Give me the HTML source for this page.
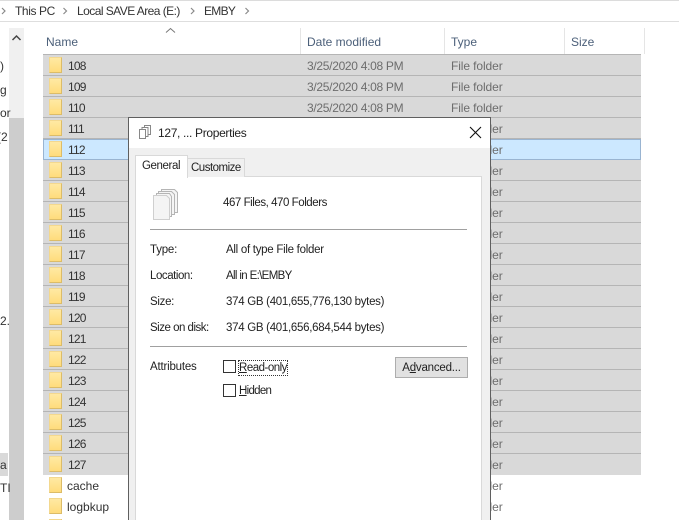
<!DOCTYPE html>
<html><head><meta charset="utf-8"><style>
html{margin:0;padding:0;background:#fff;overflow:hidden;width:679px;height:520px}
body{margin:0;padding:0;background:#fff;width:679px;height:520px;overflow:hidden;position:relative;font-family:"Liberation Sans",sans-serif;font-size:12px;color:#1a1a1a}
#w{position:absolute;left:0;top:0;width:679px;height:520px;overflow:hidden}
.a{position:absolute;white-space:nowrap;line-height:16px}
.s{font-size:11.5px;color:#222;margin-top:1px}
.r{position:absolute;left:43px;width:598px;height:20px;background:#d9d9d9;border-bottom:1px solid #b5b5b5}
.f{position:absolute;left:6px;top:2px;width:11px;height:14px;background:linear-gradient(#ffe9a3,#ffdc7c);border:1px solid #f3d88f;border-right-color:#dcbc68;border-bottom-color:#dcbc68}
.n{position:absolute;left:25px;top:3px;line-height:16px;color:#333;letter-spacing:-.8px}
.w{left:24px;letter-spacing:0}
.d{position:absolute;left:264px;top:3px;line-height:16px;color:#6d6d6d;letter-spacing:-.3px}
.t{position:absolute;left:408px;top:3px;line-height:16px;color:#6d6d6d;letter-spacing:-.1px}
.h{position:absolute;top:28px;width:1px;height:26px;background:#e5e5e5}
.c{position:absolute;left:223px;width:11px;height:11px;border:1px solid #333;background:#fff}
u{text-decoration:underline}
</style></head><body><div id="w">
<div class="a" style="left:0;top:0;width:679px;height:1px;background:#dcdcdc"></div>
<div class="a" style="left:0;top:21px;width:679px;height:1px;background:#dedede"></div>
<svg class="a" style="left:0;top:6px" width="260" height="10"><path d="M2 2l3 3-3 3M63.500 2l3 3-3 3M191 2l3 3-3 3M245.500 2l3 3-3 3" fill="none" stroke="#8a8a8a" stroke-width="1.2"/></svg>
<div class="a" style="left:15px;top:3px;color:#333;letter-spacing:-.4px">This PC</div>
<div class="a" style="left:77px;top:3px;color:#333;letter-spacing:-.55px">Local SAVE Area (E:)</div>
<div class="a" style="left:204px;top:3px;color:#333;letter-spacing:-.7px">EMBY</div>

<div class="a" style="left:9px;top:28px;width:15px;height:492px;background:#f0f0f0"></div>
<div class="a" style="left:9px;top:118px;width:15px;height:402px;background:#cdcdcd"></div>
<svg class="a" style="left:11px;top:34px" width="11" height="8"><path d="M1.500 6 L5.500 2 L9.500 6" fill="none" stroke="#444" stroke-width="1.5"/></svg>
<div class="a" style="left:0;top:58px;color:#333">)</div>
<div class="a" style="left:0;top:82px;color:#333">g</div>
<div class="a" style="left:0;top:105px;color:#333">or</div>
<div class="a" style="left:-3px;top:129px;color:#333">(2</div>
<div class="a" style="left:0;top:313px;color:#333">2.</div>
<div class="a" style="left:0;top:453px;width:8px;height:23px;background:#d9d9d9"></div>
<div class="a" style="left:0;top:457px;color:#333">a</div>
<div class="a" style="left:0;top:480px;color:#333">TI</div>

<svg class="a" style="left:165px;top:27px" width="11" height="7"><path d="M1 5.500 L5.500 1.500 L10 5.500" fill="none" stroke="#777" stroke-width="1"/></svg>
<div class="a" style="left:46px;top:34px;color:#4c607a">Name</div>
<div class="a" style="left:307px;top:34px;color:#4c607a">Date modified</div>
<div class="a" style="left:451px;top:34px;color:#4c607a">Type</div>
<div class="a" style="left:571px;top:34px;color:#4c607a">Size</div>
<div class="h" style="left:300px"></div><div class="h" style="left:444px"></div><div class="h" style="left:564px"></div><div class="h" style="left:644px"></div>
<div class="a" style="left:43px;top:54px;width:598px;height:1px;background:#b5b5b5"></div>

<div class="r" style="top:55px"><i class="f"></i><span class="n">108</span><span class="d">3/25/2020 4:08 PM</span><span class="t">File folder</span></div>
<div class="r" style="top:76px"><i class="f"></i><span class="n">109</span><span class="d">3/25/2020 4:08 PM</span><span class="t">File folder</span></div>
<div class="r" style="top:97px"><i class="f"></i><span class="n">110</span><span class="d">3/25/2020 4:08 PM</span><span class="t">File folder</span></div>
<div class="r" style="top:118px"><i class="f"></i><span class="n">111</span><span class="t">File folder</span></div>
<div class="r" style="top:139px;background:#cce8ff;width:596px;height:19px;border:1px solid #99b4d1"><i class="f" style="left:5px;top:1px"></i><span class="n" style="left:24px;top:2px">112</span><span class="t" style="left:407px;top:2px">File folder</span></div>
<div class="r" style="top:160px"><i class="f"></i><span class="n">113</span><span class="t">File folder</span></div>
<div class="r" style="top:181px"><i class="f"></i><span class="n">114</span><span class="t">File folder</span></div>
<div class="r" style="top:202px"><i class="f"></i><span class="n">115</span><span class="t">File folder</span></div>
<div class="r" style="top:223px"><i class="f"></i><span class="n">116</span><span class="t">File folder</span></div>
<div class="r" style="top:244px"><i class="f"></i><span class="n">117</span><span class="t">File folder</span></div>
<div class="r" style="top:265px"><i class="f"></i><span class="n">118</span><span class="t">File folder</span></div>
<div class="r" style="top:286px"><i class="f"></i><span class="n">119</span><span class="t">File folder</span></div>
<div class="r" style="top:307px"><i class="f"></i><span class="n">120</span><span class="t">File folder</span></div>
<div class="r" style="top:328px"><i class="f"></i><span class="n">121</span><span class="t">File folder</span></div>
<div class="r" style="top:349px"><i class="f"></i><span class="n">122</span><span class="t">File folder</span></div>
<div class="r" style="top:370px"><i class="f"></i><span class="n">123</span><span class="t">File folder</span></div>
<div class="r" style="top:391px"><i class="f"></i><span class="n">124</span><span class="t">File folder</span></div>
<div class="r" style="top:412px"><i class="f"></i><span class="n">125</span><span class="t">File folder</span></div>
<div class="r" style="top:433px"><i class="f"></i><span class="n">126</span><span class="t">File folder</span></div>
<div class="r" style="top:454px;border-bottom-color:#d9d9d9"><i class="f"></i><span class="n">127</span><span class="t">File folder</span></div>
<div class="r" style="top:475px;background:#fff;border-bottom-color:#fff"><i class="f"></i><span class="n w">cache</span><span class="t">File folder</span></div>
<div class="r" style="top:496px;background:#fff;border-bottom-color:#fff"><i class="f"></i><span class="n w">logbkup</span><span class="t">File folder</span></div>
<div class="r" style="top:517px;background:#fff;border-bottom-color:#fff;height:3px;overflow:hidden"><i class="f"></i></div>

<!-- dialog -->
<div class="a" style="left:128px;top:117px;width:361px;height:403px;background:#f0f0f0;border:1px solid #5f5f5f;border-bottom:0"></div>
<div class="a" style="left:129px;top:118px;width:361px;height:30px;background:#fff"></div>
<svg class="a" style="left:138px;top:125px" width="14" height="15"><g fill="#fff" stroke="#888"><rect x="6.500" y=".5" width="6" height="9"/><rect x="4" y="2.500" width="6" height="9"/><rect x="1.500" y="4.500" width="6" height="9"/></g></svg>
<div class="a" style="left:158px;top:125px;color:#222;letter-spacing:-.33px">127, ... Properties</div>
<svg class="a" style="left:469px;top:126px" width="13" height="13"><path d="M1 1 L12 12 M12 1 L1 12" stroke="#111" stroke-width="1.1" fill="none"/></svg>

<div class="a" style="left:135px;top:176px;width:345px;height:344px;background:#fff;border:1px solid #d9d9d9;border-bottom:0"></div>
<div class="a" style="left:187px;top:158px;width:56px;height:18px;background:#f0f0f0;border:1px solid #d9d9d9;border-bottom:0"></div>
<div class="a" style="left:135px;top:155px;width:51px;height:22px;background:#fff;border:1px solid #d9d9d9;border-bottom:0"></div>
<div class="a s" style="left:142px;top:157px;letter-spacing:-.4px">General</div>
<div class="a s" style="left:191px;top:159px;letter-spacing:-.5px">Customize</div>

<svg class="a" style="left:152px;top:188px" width="28" height="33"><g fill="#f5f5f5" stroke="#b5b5b5"><path d="M9.500 1.500h13l3 3v20h-16z"/><path d="M6.500 3.500h13l3 3v20h-16z"/><path d="M4.500 5.500h13l2 3v20h-15z"/><path d="M1.500 7.500h13l3 3v21h-16z" fill="#f4f4f4" stroke="#cfcfcf"/></g></svg>
<div class="a s" style="left:223px;top:194px;letter-spacing:-.45px">467 Files, 470 Folders</div>
<div class="a" style="left:150px;top:229px;width:317px;height:1px;background:#a0a0a0"></div>

<div class="a s" style="left:150px;top:241px;letter-spacing:-.2px">Type:</div>
<div class="a s" style="left:226px;top:241px;letter-spacing:-.28px">All of type File folder</div>
<div class="a s" style="left:150px;top:267px;letter-spacing:-.45px">Location:</div>
<div class="a s" style="left:226px;top:267px;letter-spacing:-.65px">All in E:\EMBY</div>
<div class="a s" style="left:150px;top:293px;letter-spacing:-.3px">Size:</div>
<div class="a s" style="left:226px;top:293px;letter-spacing:-.29px">374 GB (401,655,776,130 bytes)</div>
<div class="a s" style="left:150px;top:319px;letter-spacing:-.5px">Size on disk:</div>
<div class="a s" style="left:226px;top:319px;letter-spacing:-.29px">374 GB (401,656,684,544 bytes)</div>
<div class="a" style="left:150px;top:346px;width:317px;height:1px;background:#a0a0a0"></div>

<div class="a s" style="left:150px;top:358px;letter-spacing:-.2px">Attributes</div>
<div class="c" style="top:360px"></div>
<div class="a s" style="left:238px;top:359px;outline:1px dotted #333;outline-offset:-1px;padding:0 1px;letter-spacing:-.5px"><u>R</u>ead-only</div>
<div class="c" style="top:384px"></div>
<div class="a s" style="left:239px;top:382px;letter-spacing:-.7px"><u>H</u>idden</div>
<div class="a s" style="left:395px;top:357px;margin-top:0;width:71px;height:19px;background:#e1e1e1;border:1px solid #adadad;text-align:center;line-height:21px;letter-spacing:-.2px">A<u>d</u>vanced...</div>
</div></body></html>
